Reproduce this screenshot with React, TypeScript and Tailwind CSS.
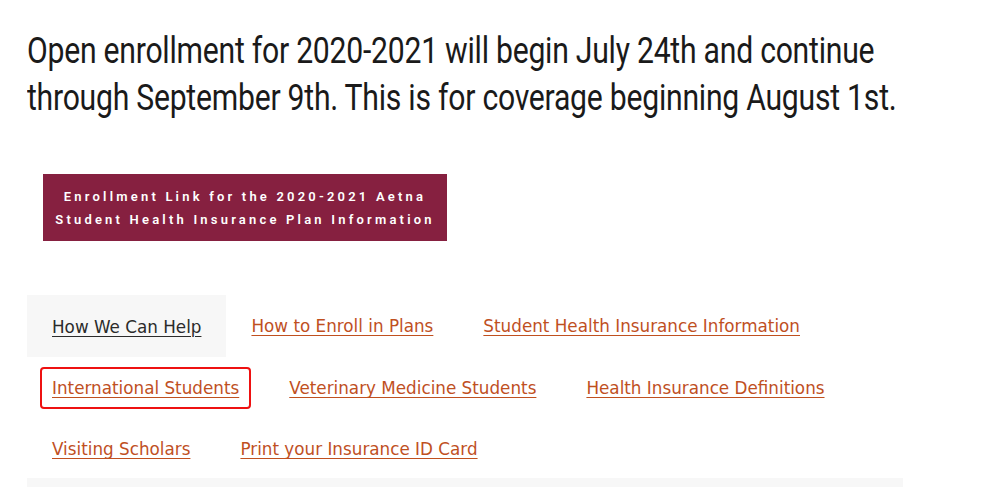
import React from 'react';

const tabs = [
  'How We Can Help',
  'How to Enroll in Plans',
  'Student Health Insurance Information',
  'International Students',
  'Veterinary Medicine Students',
  'Health Insurance Definitions',
  'Visiting Scholars',
  'Print your Insurance ID Card',
];

const heading = { fontFamily: 'Roboto, "Liberation Sans", sans-serif' } as const;

export default function App() {
  return (
    <div className="min-h-[487px] bg-white pl-[27px] pt-[28px]">
      {/* Intro */}
      <p
        className="text-[36px] leading-[47px] text-[#1a1a1a] whitespace-nowrap origin-left scale-x-[0.838] tracking-[-0.3px]"
        style={heading}
      >
        Open enrollment for 2020-2021 will begin July 24th and continue
        <br />
        through September 9th. This is for coverage beginning August 1st.
      </p>

      {/* Enrollment button */}
      <div className="mt-[52px] ml-[16px]">
        <a
          href="#"
          className="flex flex-col items-center justify-center w-[404px] h-[67px] bg-[#862040] text-white text-[13px] font-semibold leading-[23px] tracking-[3.2px] whitespace-nowrap"
          style={heading}
        >
          <span>Enrollment Link for the 2020-2021 Aetna</span>
          <span>Student Health Insurance Plan Information</span>
        </a>
      </div>

      {/* Tabs */}
      <div className="mt-[54px] w-[876px]">
        <ul className="flex flex-wrap" style={{ fontFamily: '"DejaVu Sans", sans-serif' }}>
          {tabs.map((tab, i) => (
            <li
              key={tab}
              className={
                'relative flex items-center h-[61px] px-[25px] pt-[3px] text-[16.8px] ' +
                (i === 0 ? 'bg-[#f7f7f7] h-[62px]' : '')
              }
            >
              {i === 3 && (
                <span className="absolute left-[13px] right-[13px] top-[10px] bottom-[9px] rounded-[4px] border-2 border-[#ee1111]" />
              )}
              <a
                href="#"
                className={
                  'underline underline-offset-[3px] decoration-1 ' +
                  (i === 0 ? 'text-[#2b2b2b]' : 'text-[#c0501f]')
                }
              >
                {tab}
              </a>
            </li>
          ))}
        </ul>
        <div className="h-[10px] mt-[-1px] bg-[#f7f7f7]" />
      </div>
    </div>
  );
}
